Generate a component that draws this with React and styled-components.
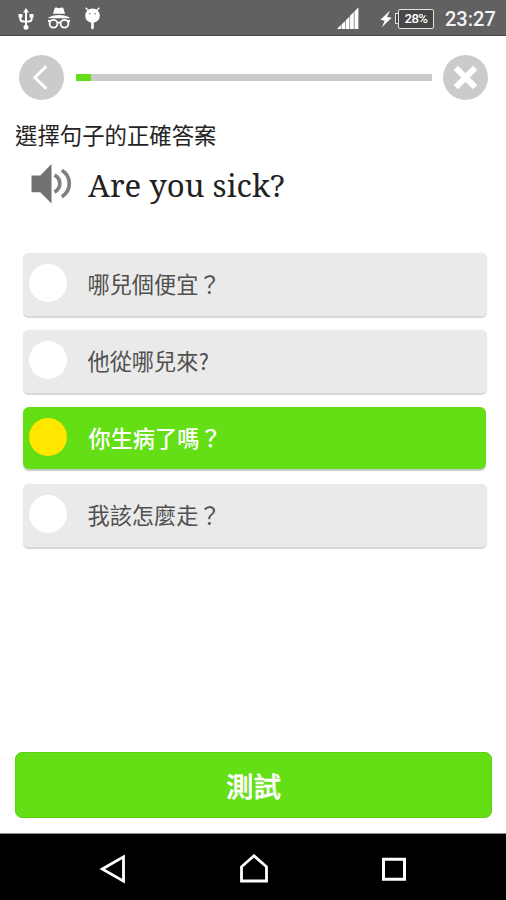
import React from "react";
import styled, { createGlobalStyle } from "styled-components";

const GREEN = "#64df16";
const GREY = "#cbcbcb";

const GlobalStyle = createGlobalStyle`
  * { box-sizing: border-box; }
  body { margin: 0; background: #fff; font-family: Roboto, "Noto Sans CJK TC", sans-serif; }
`;

const Screen = styled.div`
  width: 506px;
  height: 900px;
  display: flex;
  flex-direction: column;
  background: #fff;
  overflow: hidden;
`;

const StatusBar = styled.header`
  height: 36px;
  flex: none;
  display: flex;
  align-items: center;
  justify-content: space-between;
  padding: 2px 10px 0 18px;
  background: #616161;
  border-bottom: 1px solid #484848;
  color: #fff;
`;

const StatusGroup = styled.div`
  display: flex;
  align-items: center;
  height: 100%;
`;

const StatusLeft = styled(StatusGroup)`
  gap: 13px;
`;

const Icon = styled.svg`
  display: block;
  flex: none;
`;

const SignalIcon = styled(Icon)`
  margin-right: 21px;
`;

const BatteryLevel = styled.div`
  display: flex;
  align-items: center;
  margin-left: 3px;
`;

const Battery = styled.div`
  width: 36px;
  height: 20px;
  border: 1.5px solid #e2e2e2;
  border-radius: 2px;
  background: #474747;
  font: 500 13.2px/18px Roboto, sans-serif;
  text-align: center;
  letter-spacing: -0.6px;
`;

const Terminal = styled.div`
  width: 4px;
  height: 11px;
  margin-right: -1px;
  border: 1px solid #e2e2e2;
  border-right: 0;
  background: #474747;
`;

const Clock = styled.div`
  width: 51px;
  margin-left: 11px;
  font: 500 20px/24px Roboto, sans-serif;
  color: #f4f4f4;
  white-space: nowrap;
`;

const TopBar = styled.div`
  height: 45px;
  flex: none;
  margin: 19px 18px 0 19px;
  display: flex;
  align-items: center;
`;

const RoundButton = styled.button`
  width: 45px;
  height: 45px;
  flex: none;
  padding: 0;
  border: 0;
  border-radius: 50%;
  background: ${GREY};
  display: grid;
  place-items: center;
`;

const Track = styled.div`
  flex: 1;
  height: 7px;
  margin: 0 11px 0 12px;
  background: ${GREY};
`;

const Progress = styled.div`
  width: ${(p) => p.$value}%;
  height: 100%;
  background: ${GREEN};
`;

const Instruction = styled.p`
  height: 32px;
  flex: none;
  margin: 18px 0 0 15px;
  font: 400 22.4px/32px "Noto Sans CJK TC", sans-serif;
  color: #242424;
`;

const Question = styled.div`
  height: 44px;
  flex: none;
  margin: 12px 0 0 31px;
  display: flex;
  align-items: center;
`;

const Phrase = styled.div`
  margin: 2px 0 0 16px;
  font: 400 31.1px/44px "Noto Serif", "Droid Serif", "DejaVu Serif Condensed", serif;
  font-stretch: condensed;
  color: #222;
  white-space: nowrap;
`;

const Options = styled.div`
  display: flex;
  flex-direction: column;
  gap: 12px;
  margin: 47px 19px 0 23px;
`;

const Option = styled.div`
  height: 65px;
  display: flex;
  align-items: flex-start;
  padding: 11px 0 0 5.5px;
  ${(p) => (p.$selected ? "height: 62px; margin: 0 1px 3px 0;" : "")}
  border-radius: 6px;
  border-bottom: ${(p) => (p.$selected ? "0" : "2px solid #d9d9d9")};
  background: ${(p) => (p.$selected ? GREEN : "#eaeaea")};
  box-shadow: ${(p) => (p.$selected ? "0 1.5px 1px #c6ccc2" : "0 0 1px #e2e2e2")};
`;

const Dot = styled.span`
  width: 38px;
  height: 38px;
  flex: none;
  border-radius: 50%;
  background: ${(p) => (p.$selected ? "#ffe700" : "#fff")};
`;

const OptionLabel = styled.span`
  margin: 3px 0 0 ${(p) => (p.$selected ? 22 : 21)}px;
  font: ${(p) => (p.$selected ? 500 : 400)} 22.2px/32px "Noto Sans CJK TC", sans-serif;
  color: ${(p) => (p.$selected ? "#fff" : "#505050")};
`;

const SubmitButton = styled.button`
  height: 66px;
  flex: none;
  margin: auto 14px 15px 15px;
  padding: 0;
  border: 1px solid #5cd012;
  border-radius: 7px;
  background: ${GREEN};
  color: #fff;
  font: 500 27.5px/40px "Noto Sans CJK TC", sans-serif;
  -webkit-text-stroke: 0.4px #fff;
`;

const NavBar = styled.nav`
  height: 67px;
  flex: none;
  display: flex;
  justify-content: center;
  align-items: center;
  gap: 112px;
  padding: 4px 0 0;
  border-top: 1px solid #8a8a8a;
  background: #000;
`;

const UsbIcon = () => (
  <Icon width="16" height="24" viewBox="0 0 16 24" fill="none" stroke="#fff" strokeWidth="2">
    <path d="M8 4v16M2.3 9v2.5q0 3 3 3h5.4q3 0 3-3V9" />
    <path d="M8 1l3 4.5H5zM0.5 7h4v3.5h-4zM11.5 7h4v3.5h-4z" fill="#fff" stroke="none" />
    <circle cx="8" cy="20.3" r="2.5" fill="#fff" stroke="none" />
  </Icon>
);

const IncognitoIcon = () => (
  <Icon width="24" height="24" viewBox="0 0 24 24" fill="#fff">
    <path d="M6 6.7L7.6 1.3q.5-1.2 1.8-.8l2.6.8 2.6-.8q1.3-.4 1.8.8L18 6.7z" />
    <path d="M.6 11.2Q5 8 12 8t11.4 3.2z" />
    <g fill="none" stroke="#fff" strokeWidth="1.8">
      <circle cx="6.5" cy="16.8" r="3.9" />
      <circle cx="17.5" cy="16.8" r="3.9" />
      <path d="M10.4 16q1.6-1.2 3.2 0M1 14h3M20 14h3" />
    </g>
  </Icon>
);

const DroidIcon = () => (
  <Icon width="17" height="24" viewBox="0 0 17 24">
    <path d="M1.6.8L5 4M15.4.8L12 4" stroke="#fff" strokeWidth="1.3" />
    <circle cx="8.5" cy="8.7" r="7.3" fill="#fff" />
    <path d="M8.5 15v6" stroke="#fff" strokeWidth="2.6" strokeLinecap="round" />
    <circle cx="5.8" cy="6.8" r=".8" fill="#777" />
    <circle cx="11.2" cy="6.8" r=".8" fill="#777" />
  </Icon>
);

const Signal = () => (
  <SignalIcon width="22" height="24" viewBox="0 0 22 24" fill="#fff">
    <path d="M0 22l3.9-3.9V22zM4.5 17.6l3.7-3.7V22H4.5zM8.8 13.3l3.7-3.8V22H8.8zM13.1 8.7L16.8 5v17h-3.7zM17.5 4.2L21.4.5V22h-3.9z" />
  </SignalIcon>
);

const Bolt = () => (
  <Icon width="12" height="18" viewBox="0 0 12 18" fill="#fff">
    <path d="M10 .4L.4 9.8l4.3 1L1.8 17.2l9.9-9.4-4.7-.9z" />
  </Icon>
);

const Speaker = () => (
  <Icon width="41" height="42" viewBox="0 0 41 42">
    <path d="M.5 12.5h8.8L20.5 1v39.5L9.3 29.2H.5z" fill="#727272" />
    <g fill="none" stroke="#808080" strokeWidth="3.7">
      <path d="M23.5 12.2q5.3 2.8 5.3 8.4t-5.3 8.6" />
      <path d="M30.8 7.2q7.5 4.8 7.5 13.4t-7.5 13.2" />
    </g>
  </Icon>
);

const answers = [
  { text: "哪兒個便宜？" },
  { text: "他從哪兒來?" },
  { text: "你生病了嗎？", selected: true },
  { text: "我該怎麼走？" },
];

export default function App() {
  return (
    <Screen>
      <GlobalStyle />
      <StatusBar>
        <StatusLeft>
          <UsbIcon />
          <IncognitoIcon />
          <DroidIcon />
        </StatusLeft>
        <StatusGroup>
          <Signal />
          <Bolt />
          <BatteryLevel>
            <Terminal />
            <Battery>28%</Battery>
          </BatteryLevel>
          <Clock>23:27</Clock>
        </StatusGroup>
      </StatusBar>
      <TopBar>
        <RoundButton aria-label="Back">
          <Icon width="45" height="45" viewBox="0 0 45 45" fill="none" stroke="#fff" strokeWidth="3">
            <path d="M27.3 11.2L15.8 22.5l11.5 11.3" />
          </Icon>
        </RoundButton>
        <Track>
          <Progress $value={4.1} />
        </Track>
        <RoundButton aria-label="Close">
          <Icon width="45" height="45" viewBox="0 0 45 45" stroke="#fff" strokeWidth="6">
            <path d="M12.8 12.8l19.4 19.4M32.2 12.8L12.8 32.2" />
          </Icon>
        </RoundButton>
      </TopBar>
      <Instruction>選擇句子的正確答案</Instruction>
      <Question>
        <Speaker />
        <Phrase>Are you sick?</Phrase>
      </Question>
      <Options>
        {answers.map((a) => (
          <Option key={a.text} $selected={a.selected}>
            <Dot $selected={a.selected} />
            <OptionLabel $selected={a.selected}>{a.text}</OptionLabel>
          </Option>
        ))}
      </Options>
      <SubmitButton>測試</SubmitButton>
      <NavBar>
        <Icon width="28" height="30" viewBox="0 0 28 30" fill="none" stroke="#fff" strokeWidth="2.8">
          <path d="M3.3 15L24.5 2.8v24.4z" />
        </Icon>
        <Icon width="30" height="30" viewBox="0 0 30 30" fill="none" stroke="#fff" strokeWidth="2.8">
          <path d="M2.5 27V12.8L15 1.8l12.5 11V27z" />
        </Icon>
        <Icon width="26" height="26" viewBox="0 0 26 26" fill="none" stroke="#fff" strokeWidth="3">
          <path d="M2.5 3.3h21v20h-21z" />
        </Icon>
      </NavBar>
    </Screen>
  );
}
